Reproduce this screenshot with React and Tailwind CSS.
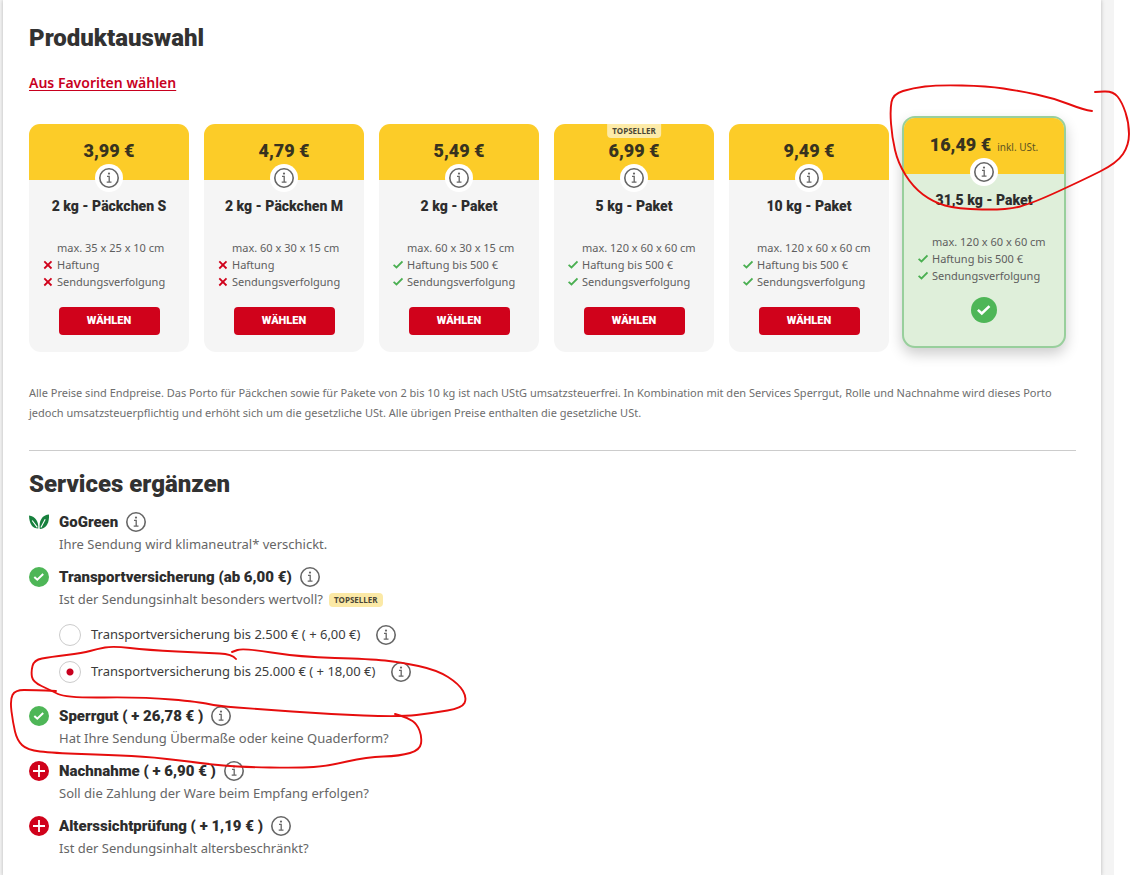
import { useState } from "react";

const products = [
  { id: "ps", price: "3,99 €", name: "2 kg - Päckchen S", size: "max. 35 x 25 x 10 cm", insured: false },
  { id: "pm", price: "4,79 €", name: "2 kg - Päckchen M", size: "max. 60 x 30 x 15 cm", insured: false },
  { id: "p2", price: "5,49 €", name: "2 kg - Paket", size: "max. 60 x 30 x 15 cm", insured: true },
  { id: "p5", price: "6,99 €", name: "5 kg - Paket", size: "max. 120 x 60 x 60 cm", insured: true, topseller: true },
  { id: "p10", price: "9,49 €", name: "10 kg - Paket", size: "max. 120 x 60 x 60 cm", insured: true },
  { id: "p31", price: "16,49 €", note: "inkl. USt.", name: "31,5 kg - Paket", size: "max. 120 x 60 x 60 cm", insured: true },
];

const insurances = [
  { id: "2500", label: "Transportversicherung bis 2.500 € ( + 6,00 €)" },
  { id: "25000", label: "Transportversicherung bis 25.000 € ( + 18,00 €)" },
];

// red pen strokes drawn over the page
const strokes = [
  [[1092, 111], [1084, 110], [1053, 98], [1020, 91], [987, 86], [937, 85], [913, 88], [893, 94], [890, 110], [892, 137], [898, 163], [913, 187], [933, 202], [957, 209], [1007, 210], [1033, 203], [1083, 180], [1117, 163], [1129, 145], [1129, 123], [1122, 102], [1113, 91], [1095, 92]],
  [[236, 659], [232, 654], [207, 653], [147, 650], [113, 646], [97, 649], [83, 653], [50, 657], [34, 660], [31, 672], [33, 682], [50, 690], [66, 698], [143, 697], [200, 702], [217, 706], [257, 709], [327, 714], [400, 717], [433, 713], [462, 708], [467, 698], [459, 684], [437, 670], [400, 662], [370, 659], [300, 657], [243, 648], [232, 652]],
  [[56, 691], [33, 690], [15, 690], [10, 700], [13, 723], [17, 740], [27, 750], [53, 753], [110, 755], [153, 757], [207, 764], [240, 767], [300, 768], [327, 766], [367, 757], [400, 756], [420, 750], [422, 737], [417, 724], [408, 718], [395, 714]],
];

function smooth(points) {
  let d = `M${points[0]}`;
  for (let i = 1; i < points.length - 1; i++) {
    const [x, y] = points[i];
    const [nx, ny] = points[i + 1];
    d += ` Q${x} ${y} ${(x + nx) / 2} ${(y + ny) / 2}`;
  }
  return `${d} L${points[points.length - 1]}`;
}

function InfoIcon() {
  return (
    <svg viewBox="0 0 20 20" className="block size-5" fill="none" stroke="#666" aria-hidden="true">
      <circle cx="10" cy="10" r="9.2" strokeWidth="1.6" />
      <path d="M8 8.3h2.2v5.6M7.7 14.2h4.8" strokeWidth="1.3" />
      <circle cx="10" cy="5.6" r="1.1" fill="#666" stroke="none" />
    </svg>
  );
}

function InfoButton({ label }) {
  return (
    <button type="button" aria-label={`Info: ${label}`} className="block shrink-0 cursor-pointer rounded-full">
      <InfoIcon />
    </button>
  );
}

function Mark({ ok }) {
  return ok ? (
    <svg viewBox="0 0 10 10" className="size-[10px] shrink-0" fill="none" stroke="#4aaf51" strokeWidth="1.8" aria-hidden="true">
      <path d="M.6 4.8 3.500 7.500 9.500 1.500" />
    </svg>
  ) : (
    <svg viewBox="0 0 10 10" className="size-[10px] shrink-0" fill="none" stroke="#d0021b" strokeWidth="1.8" aria-hidden="true">
      <path d="M1.300 1.300l7.200 7.200M8.500 1.300 1.300 8.500" />
    </svg>
  );
}

function CheckCircle({ className }) {
  return (
    <svg viewBox="0 0 20 20" className={className} aria-hidden="true">
      <circle cx="10" cy="10" r="10" fill="#4eb657" />
      <path d="M5.300 9.900 8.300 12.700l5.900-5.700" fill="none" stroke="#fff" strokeWidth="2" />
    </svg>
  );
}

function PlusCircle({ className }) {
  return (
    <svg viewBox="0 0 20 20" className={className} aria-hidden="true">
      <circle cx="10" cy="10" r="10" fill="#d0021b" />
      <path d="M10 4v12M4 10h12" stroke="#fff" strokeWidth="1.8" />
    </svg>
  );
}

function LeafIcon() {
  return (
    <svg viewBox="0 0 20 20" className="block size-5" aria-hidden="true">
      <path d="M0 3.500C6 4.500 9.600 8.500 9.300 16.500 3.500 16.500.200 12 0 3.500z" fill="#17803d" />
      <path d="M20 2.500C13.500 3 9.500 8.500 10.800 16.900 17.500 16.900 20.500 10.500 20 2.500z" fill="#17803d" />
      <path d="M3.200 8.500 8.300 15.300M16.200 7.200 11.900 15.500" stroke="#fff" strokeWidth="1.100" fill="none" />
    </svg>
  );
}

function ProductCard({ product, selected, onSelect }) {
  return (
    <li
      className={
        selected
          ? "relative -mx-0.5 -mt-2 mb-1 rounded-[13px] border-2 border-[#98cf9c] bg-[#dfefda] shadow-[0_6px_14px_rgba(0,0,0,0.2)]"
          : "relative rounded-xl bg-[#f5f5f5]"
      }
    >
      <div className="relative h-14 rounded-t-[11px] bg-[#fccc28] pt-[15px] text-center">
        {product.topseller && (
          <span className="absolute top-0 left-1/2 -translate-x-1/2 rounded-b bg-[#fdeba8] px-[5px] font-['Open_Sans',sans-serif] text-[8px] leading-[14px] font-bold text-[#4a4636]">
            TOPSELLER
          </span>
        )}
        <p className="font-[Roboto,sans-serif] text-lg leading-6 font-black whitespace-nowrap text-[#38331f]">
          {product.price}
          {product.note && (
            <span className="ml-1.5 font-['Noto_Sans',sans-serif] text-[10px] font-normal text-[#5d5322]">{product.note}</span>
          )}
        </p>
        <div className="absolute top-10 left-1/2 -translate-x-1/2 rounded-full bg-white p-1">
          <InfoButton label={product.name} />
        </div>
      </div>
      <h3 className="mt-[14px] text-center font-[Roboto,sans-serif] text-sm leading-6 font-black text-[#2d2d2d]">{product.name}</h3>
      <ul className="mt-[21px] pl-[14px] text-[11px] leading-[17px] whitespace-nowrap text-[#5e5e5e]">
        <li className="pl-[14px]">{product.size}</li>
        <li className="flex items-center gap-1">
          <Mark ok={product.insured} />
          {product.insured ? "Haftung bis 500 €" : "Haftung"}
        </li>
        <li className="flex items-center gap-1">
          <Mark ok={product.insured} />
          Sendungsverfolgung
        </li>
      </ul>
      {selected ? (
        <div className="mt-[13px] flex justify-center pb-[23px]">
          <CheckCircle className="size-[26px]" />
        </div>
      ) : (
        <div className="mt-[17px] flex justify-center pb-[17px]">
          <button
            type="button"
            onClick={onSelect}
            className="h-7 w-[101px] cursor-pointer rounded bg-[#d0021b] font-[Roboto,sans-serif] text-[11px] leading-4 font-black text-white"
          >
            WÄHLEN
          </button>
        </div>
      )}
    </li>
  );
}

function Service({ id, title, text, badge, checked, onToggle, children }) {
  return (
    <li>
      <div className="flex h-6 items-center">
        {onToggle ? (
          <label htmlFor={id} className="flex cursor-pointer items-center gap-[10px]">
            <input id={id} type="checkbox" checked={checked} onChange={onToggle} className="sr-only" />
            {checked ? <CheckCircle className="size-5" /> : <PlusCircle className="size-5" />}
            <span className="font-[Roboto,sans-serif] text-[15px] font-black text-[#2d2d2d]">{title}</span>
          </label>
        ) : (
          <div className="flex items-center gap-[10px]">
            <LeafIcon />
            <span className="font-[Roboto,sans-serif] text-[15px] font-black text-[#2d2d2d]">{title}</span>
          </div>
        )}
        <div className="ml-2">
          <InfoButton label={title} />
        </div>
      </div>
      <div className="flex h-[22px] items-center gap-1.5 pl-[30px] text-[13px] text-[#666]">
        <p>{text}</p>
        {badge && (
          <span className="rounded bg-[#fbe9a6] px-[5px] font-['Open_Sans',sans-serif] text-[8px] leading-[14px] font-bold text-[#4a4636]">
            {badge}
          </span>
        )}
      </div>
      {children}
    </li>
  );
}

export default function App() {
  const [selected, setSelected] = useState("p31");
  const [insurance, setInsurance] = useState("25000");
  const [services, setServices] = useState({ insurance: true, bulky: true, cod: false, age: false });

  const toggle = (key) => () => setServices((prev) => ({ ...prev, [key]: !prev[key] }));

  return (
    <div className="relative min-h-screen overflow-hidden bg-white pr-4 font-['Noto_Sans',sans-serif]">
      <div className="min-h-screen bg-[#f4f4f4] pr-[13px] pl-[3px]">
        <main className="min-h-screen bg-white pt-5 pr-[25px] pb-4 pl-[26px] shadow-[0_0_4px_rgba(0,0,0,0.25)]">
          <h1 className="font-[Roboto,sans-serif] text-2xl leading-9 font-black text-[#323232]">Produktauswahl</h1>
          <a href="#favoriten" className="mt-4 inline-block text-sm leading-[22px] font-semibold text-[#c8001e] underline underline-offset-2">
            Aus Favoriten wählen
          </a>

          <ul className="mt-[30px] grid grid-cols-6 items-start gap-[15px] pr-3">
            {products.map((p) => (
              <ProductCard key={p.id} product={p} selected={p.id === selected} onSelect={() => setSelected(p.id)} />
            ))}
          </ul>

          <p className="mt-[31px] text-[11px] leading-5 text-[#6e6e6e]">
            Alle Preise sind Endpreise. Das Porto für Päckchen sowie für Pakete von 2 bis 10 kg ist nach UStG umsatzsteuerfrei. In
            Kombination mit den Services Sperrgut, Rolle und Nachnahme wird dieses Porto jedoch umsatzsteuerpflichtig und erhöht
            sich um die gesetzliche USt. Alle übrigen Preise enthalten die gesetzliche USt.
          </p>

          <hr className="mt-[27px] border-[#ccc]" />

          <h2 className="mt-[15px] font-[Roboto,sans-serif] text-2xl leading-9 font-black text-[#323232]">Services ergänzen</h2>
          <ul className="mt-2 space-y-[9px]">
            <Service title="GoGreen" text="Ihre Sendung wird klimaneutral* verschickt." />
            <Service
              id="insurance"
              title="Transportversicherung (ab 6,00 €)"
              text="Ist der Sendungsinhalt besonders wertvoll?"
              badge="TOPSELLER"
              checked={services.insurance}
              onToggle={toggle("insurance")}
            >
              {services.insurance && (
                <div className="space-y-[15px] pt-[13px] pb-3 pl-[30px]">
                  {insurances.map((i) => (
                    <div key={i.id} className="flex h-[22px] items-center">
                      <input
                        id={`ins-${i.id}`}
                        type="radio"
                        name="ins"
                        checked={insurance === i.id}
                        onChange={() => setInsurance(i.id)}
                        className="size-[22px] appearance-none rounded-full border border-[#ccc] bg-white checked:bg-[radial-gradient(circle,#c8001e_3px,transparent_4px)]"
                      />
                      <label htmlFor={`ins-${i.id}`} className="ml-[10px] text-[13px] text-[#3c3c3c]">
                        {i.label}
                      </label>
                      <div className="ml-4">
                        <InfoButton label={i.label} />
                      </div>
                    </div>
                  ))}
                </div>
              )}
            </Service>
            <Service
              id="bulky"
              title="Sperrgut ( + 26,78 € )"
              text="Hat Ihre Sendung Übermaße oder keine Quaderform?"
              checked={services.bulky}
              onToggle={toggle("bulky")}
            />
            <Service
              id="cod"
              title="Nachnahme ( + 6,90 € )"
              text="Soll die Zahlung der Ware beim Empfang erfolgen?"
              checked={services.cod}
              onToggle={toggle("cod")}
            />
            <Service
              id="age"
              title="Alterssichtprüfung ( + 1,19 € )"
              text="Ist der Sendungsinhalt altersbeschränkt?"
              checked={services.age}
              onToggle={toggle("age")}
            />
          </ul>
        </main>
      </div>

      <svg
        viewBox="0 0 1130 875"
        className="pointer-events-none absolute top-0 left-0 h-[875px] w-[1130px]"
        fill="none"
        stroke="#e60d0d"
        strokeWidth="1.9"
        strokeLinecap="round"
        strokeLinejoin="round"
        aria-hidden="true"
      >
        {strokes.map((points, i) => (
          <path key={i} d={smooth(points)} />
        ))}
      </svg>
    </div>
  );
}
